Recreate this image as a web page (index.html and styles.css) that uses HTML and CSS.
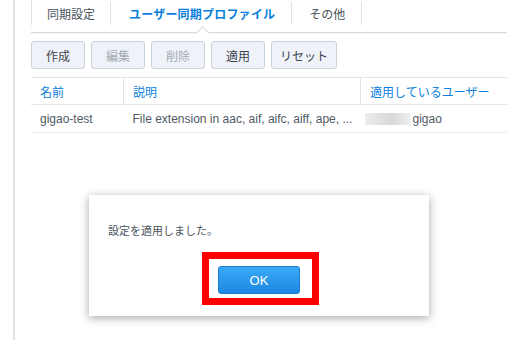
FILE: index.html
```html
<!DOCTYPE html>
<html lang="ja">
<head>
    <meta charset="UTF-8">
    <meta name="viewport" content="width=device-width, initial-scale=1.0">
    <title>ユーザー同期プロファイル</title>
    <link rel="stylesheet" href="styles.css">
</head>
<body>

    <div class="frame">
        <div class="panel">
            <!-- Tabs -->
            <nav class="tabs">
                <div class="tab">同期設定</div>
                <div class="tab active">ユーザー同期プロファイル</div>
                <div class="tab">その他</div>
            </nav>

            <!-- Toolbar -->
            <div class="toolbar">
                <button class="btn">作成</button>
                <button class="btn" disabled>編集</button>
                <button class="btn" disabled>削除</button>
                <button class="btn">適用</button>
                <button class="btn">リセット</button>
            </div>

            <!-- Profiles -->
            <table class="grid">
                <thead>
                    <tr>
                        <th class="col-name">名前</th>
                        <th class="col-desc">説明</th>
                        <th>適用しているユーザー</th>
                    </tr>
                </thead>
                <tbody>
                    <tr>
                        <td>gigao-test</td>
                        <td>File extension in aac, aif, aifc, aiff, ape, ...</td>
                        <td><span class="masked"></span>gigao</td>
                    </tr>
                </tbody>
            </table>
        </div>
    </div>

    <!-- Message box -->
    <div class="dialog">
        <p class="dialog-msg">設定を適用しました。</p>
        <div class="dialog-foot">
            <div class="highlight">
                <button class="btn-ok">OK</button>
            </div>
        </div>
    </div>

</body>
</html>
```

FILE: styles.css
```css
body {
    margin: 0;
    height: 340px;
    overflow: hidden;
    background: #fff;
    font-family: 'Liberation Sans', 'Noto Sans CJK JP', sans-serif;
    font-size: 12px;
    color: #505a64;
}

.frame {
    margin-left: 13px;
    height: 340px;
    border-left: 2px solid #e1e1e1;
    padding-left: 16px;
}

/* tabs */
.tabs {
    display: flex;
    height: 32px;
    border-bottom: 1px solid #d6dbe1;
    box-shadow: 0 1px 1px rgba(0, 0, 0, 0.04);
    position: relative;
}

.tab {
    position: relative;
    padding: 0 16px;
    line-height: 30px;
    color: #4a535c;
    white-space: nowrap;
}

.tab::before {
    content: '';
    position: absolute;
    right: 0;
    top: 2px;
    height: 23px;
    border-right: 1px solid #dde2e8;
}

.tab:first-child::after {
    content: '';
    position: absolute;
    left: 0;
    top: 0;
    height: 25px;
    border-left: 1px solid #dde2e8;
}

.tab.active {
    padding: 0 17px 0 18px;
    color: #0a80dc;
    font-weight: bold;
    letter-spacing: 0.2px;
}

.tab:last-child {
    padding: 0 17px;
}

.tab.active::after {
    content: '';
    position: absolute;
    left: 50%;
    bottom: -5px;
    width: 8px;
    height: 8px;
    margin-left: -4px;
    background: #fff;
    border-left: 1px solid #d6dbe1;
    border-top: 1px solid #d6dbe1;
    transform: rotate(45deg);
}

/* toolbar */
.toolbar {
    display: flex;
    gap: 6px;
    padding: 8px 0 8px;
}

.btn {
    min-width: 54px;
    height: 28px;
    padding: 0 8px;
    font-family: inherit;
    font-size: 12px;
    color: #3c444c;
    background: #eff3f9;
    border: 1px solid #c9d1db;
    border-radius: 3px;
}

.btn:disabled {
    color: #a3abb4;
}

/* table */
.grid {
    width: 100%;
    border-collapse: collapse;
    border-top: 1px solid #dde5ee;
}

.grid th, .grid td {
    text-align: left;
    font-weight: normal;
    white-space: nowrap;
    padding: 0 8px 0 9px;
}

.grid th {
    height: 26px;
    color: #0a80dc;
    border-bottom: 1px solid #dde5ee;
    border-left: 1px solid #dde5ee;
}

.grid th:first-child {
    border-left: none;
}

.grid td {
    height: 27px;
    border-bottom: 1px solid #e6ebf1;
}

.col-name {
    width: 75px;
}

.col-desc {
    width: 219px;
}

.masked {
    display: inline-block;
    width: 46px;
    height: 12px;
    margin: 0 2px 0 -5px;
    vertical-align: -2px;
    background: linear-gradient(90deg, #ececec, #d8d8d8 60%, #f0f0f0);
}

/* message box */
.dialog {
    position: absolute;
    left: 89px;
    top: 195px;
    width: 340px;
    box-sizing: border-box;
    background: #fff;
    box-shadow: 0 2px 9px rgba(0, 0, 0, 0.35);
    padding: 28px 0 11px;
}

.dialog-msg {
    margin: 0 0 13px 19px;
    font-size: 11px;
    line-height: 16px;
    color: #4a535c;
}

.dialog-foot {
    display: flex;
    justify-content: center;
    padding-left: 3px;
}

.highlight {
    border: 7px solid #ff0000;
    padding: 7px 12px 4px 9px;
}

.btn-ok {
    display: block;
    width: 82px;
    height: 28px;
    font-family: inherit;
    font-size: 13px;
    color: #fff;
    background: linear-gradient(#3aa9f6, #1d87e3);
    border: 1px solid #1b7bd0;
    border-radius: 3px;
}
```
